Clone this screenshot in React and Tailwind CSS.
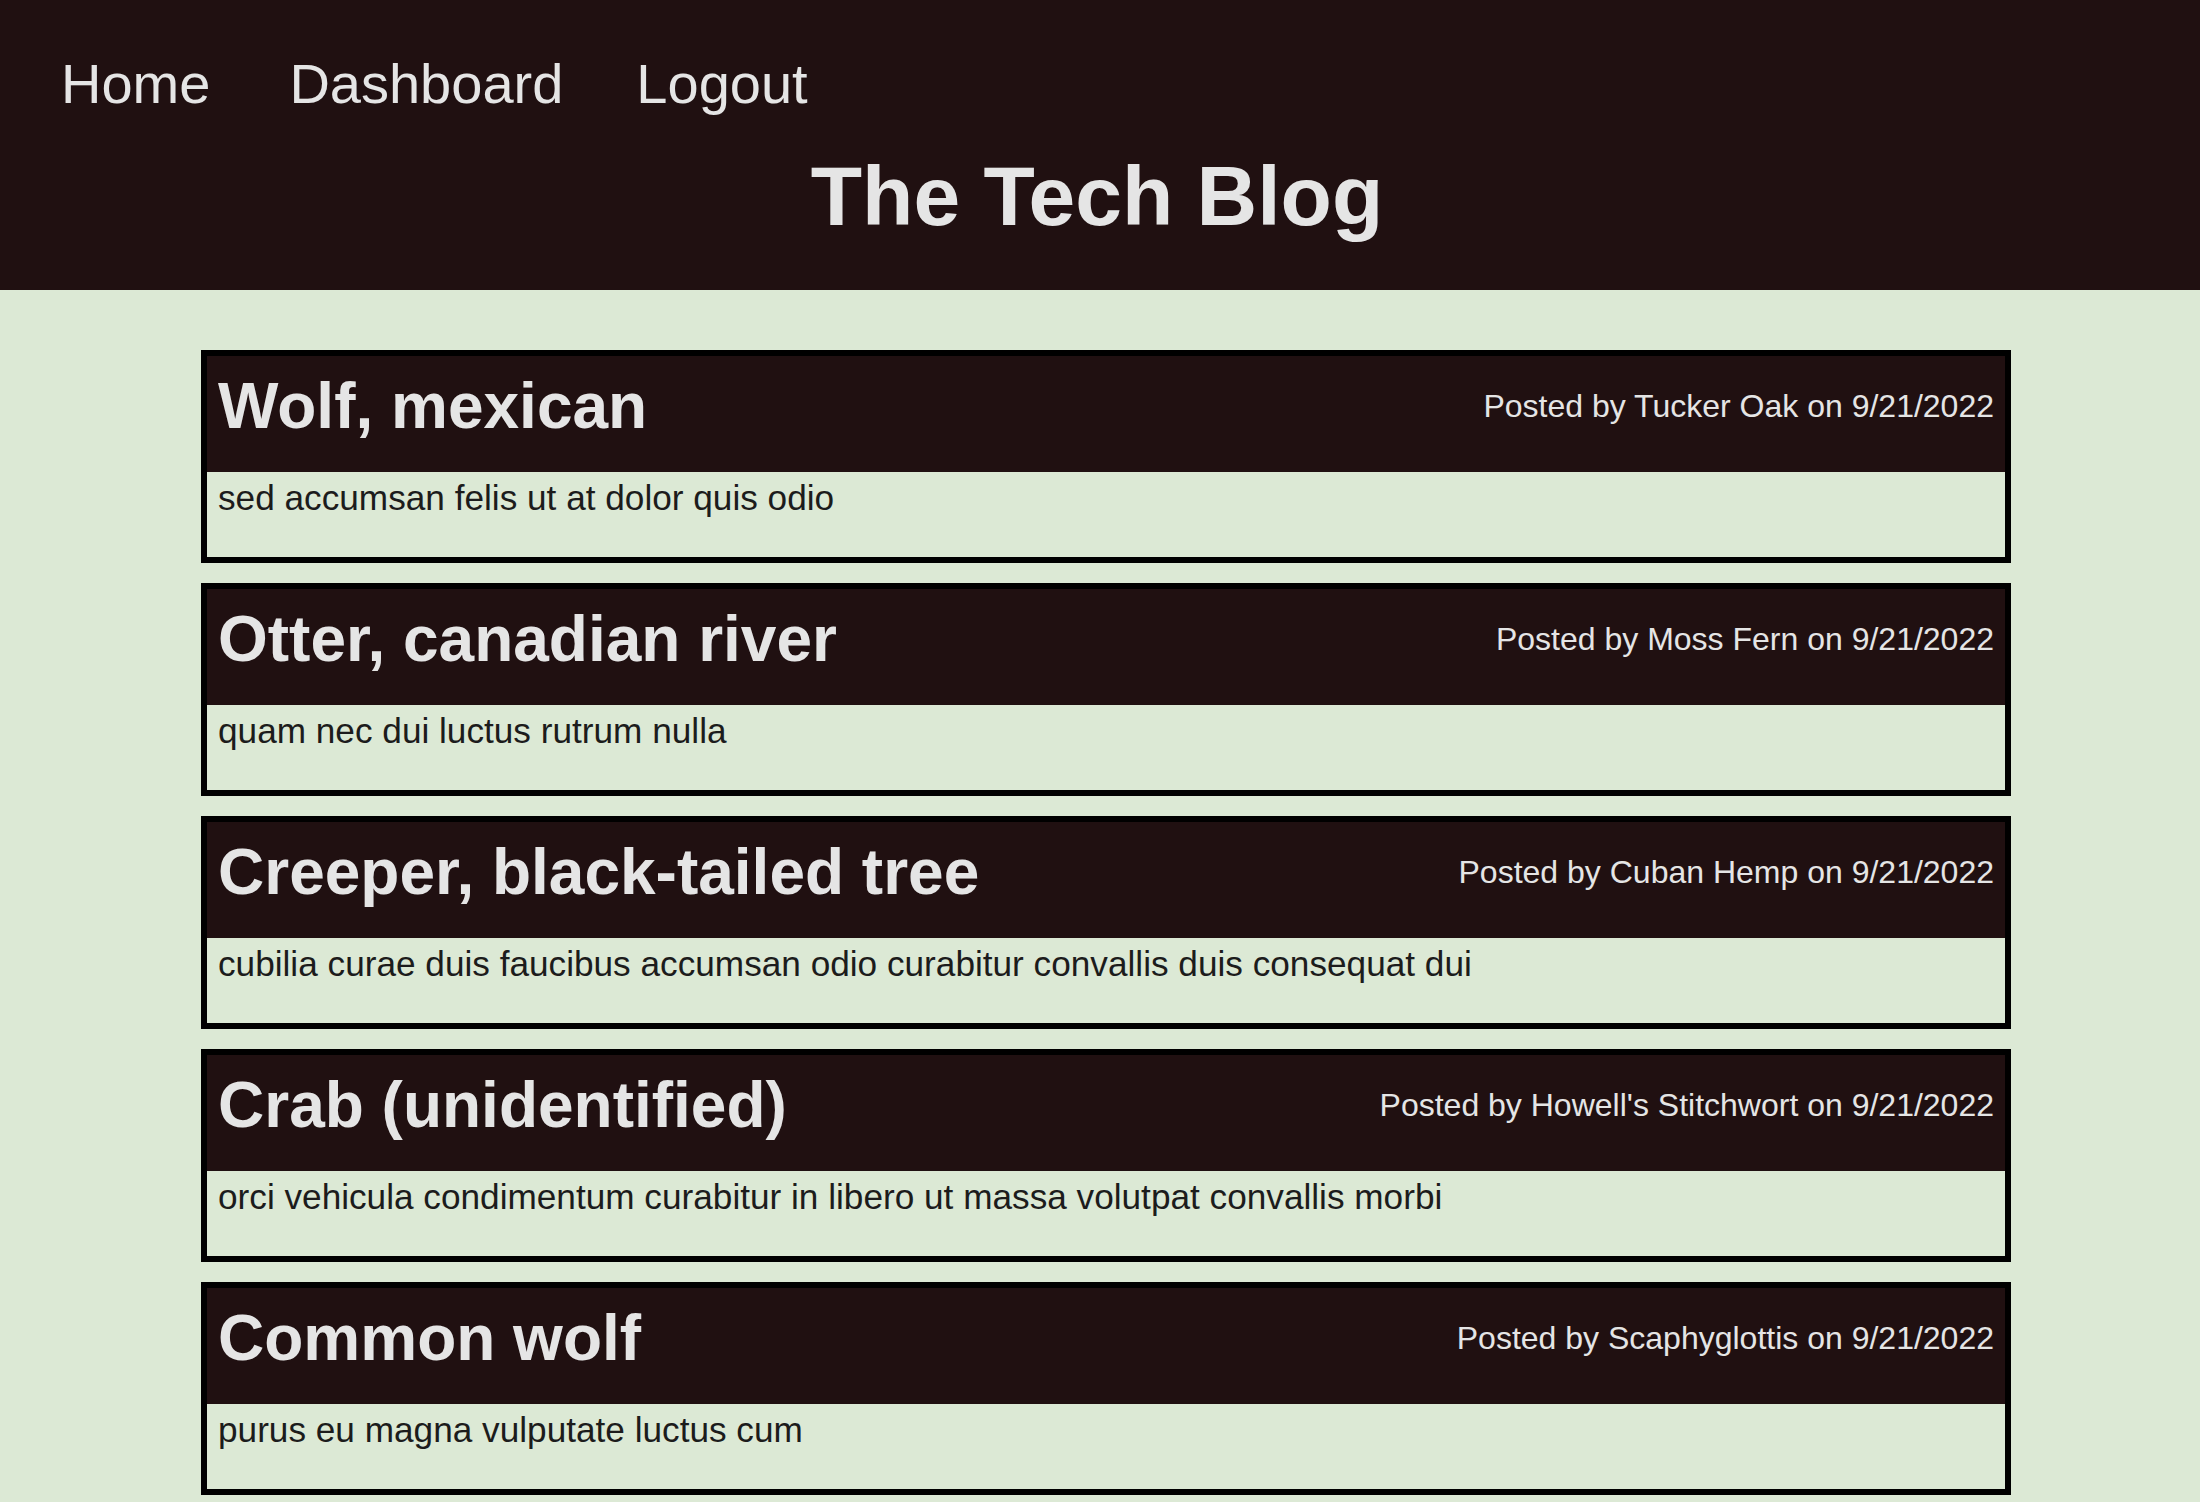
import React from "react";

const posts = [
	{
		id: 1,
		title: "Wolf, mexican",
		author: "Tucker Oak",
		date: "9/21/2022",
		body: "sed accumsan felis ut at dolor quis odio",
	},
	{
		id: 2,
		title: "Otter, canadian river",
		author: "Moss Fern",
		date: "9/21/2022",
		body: "quam nec dui luctus rutrum nulla",
	},
	{
		id: 3,
		title: "Creeper, black-tailed tree",
		author: "Cuban Hemp",
		date: "9/21/2022",
		body: "cubilia curae duis faucibus accumsan odio curabitur convallis duis consequat dui",
	},
	{
		id: 4,
		title: "Crab (unidentified)",
		author: "Howell's Stitchwort",
		date: "9/21/2022",
		body: "orci vehicula condimentum curabitur in libero ut massa volutpat convallis morbi",
	},
	{
		id: 5,
		title: "Common wolf",
		author: "Scaphyglottis",
		date: "9/21/2022",
		body: "purus eu magna vulputate luctus cum",
	},
];

function PostCard({ post }) {
	return (
		<div className="ml-[201px] w-[1810px] border-[6px] border-black">
			{/* Post header */}
			<div className="flex justify-between items-center bg-[#201011] px-[11px] pt-[13px] pb-[29px] text-[#e5e5e5]">
				<h2 className="text-[64px] leading-[74px] font-bold">{post.title}</h2>
				<p className="text-[32px] leading-[36px]">
					Posted by {post.author} on {post.date}
				</p>
			</div>
			{/* Post body */}
			<div className="h-[85px] px-[11px] pt-[6px] text-[35.2px] leading-[40px] text-[#1c1c1c]">
				{post.body}
			</div>
		</div>
	);
}

export default function App() {
	return (
		<div className="min-h-screen bg-[#dce9d5] font-['Liberation_Sans',Arial,sans-serif]">
			<header className="bg-[#201011] pt-[52px] pb-[46px] text-[#e5e5e5]">
				<nav className="flex text-[56px] leading-[64px]">
					<a href="#" className="ml-[61px]">
						Home
					</a>
					<a href="#" className="ml-[79px]">
						Dashboard
					</a>
					<a href="#" className="ml-[73px]">
						Logout
					</a>
				</nav>
				<h1 className="mt-[32px] pr-[6px] text-center text-[84px] leading-[96px] font-bold">
					The Tech Blog
				</h1>
			</header>

			<main className="pt-[60px] flex flex-col gap-[20px] pb-[7px]">
				{posts.map((post) => (
					<PostCard key={post.id} post={post} />
				))}
			</main>
		</div>
	);
}
